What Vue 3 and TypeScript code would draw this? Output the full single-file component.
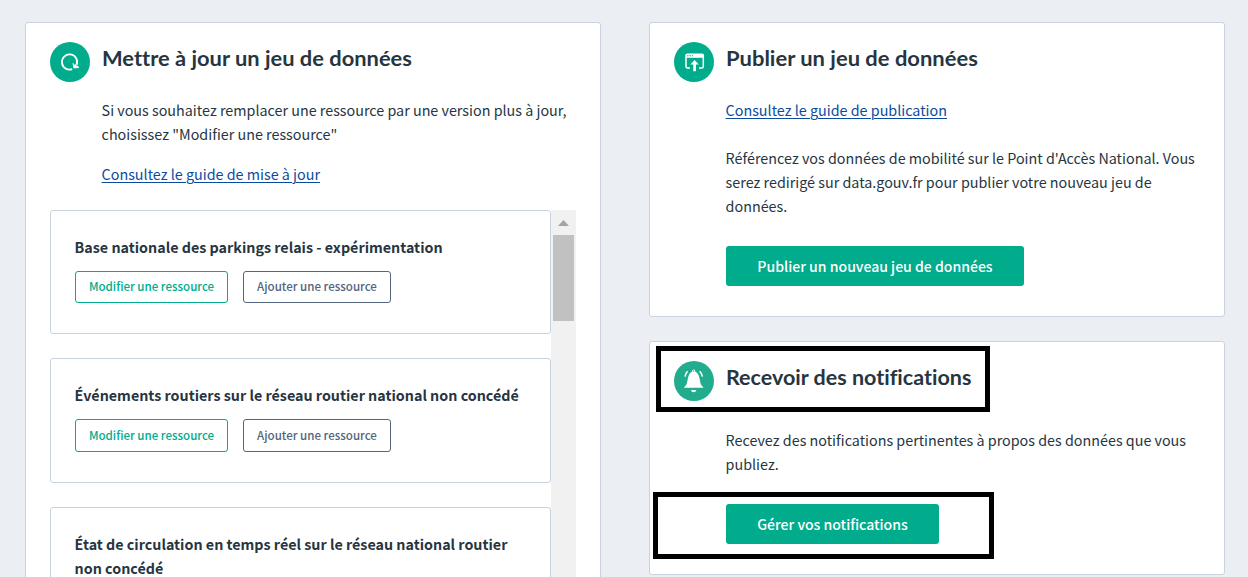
<script setup lang="ts">
interface Dataset {
  id: number
  lines: string[]
  actions: boolean
}

const datasets: Dataset[] = [
  { id: 1, lines: ['Base nationale des parkings relais - expérimentation'], actions: true },
  { id: 2, lines: ['Événements routiers sur le réseau routier national non concédé'], actions: true },
  { id: 3, lines: ['État de circulation en temps réel sur le réseau national routier', 'non concédé'], actions: false },
]
</script>

<template>
  <main class="page">
    <section class="card update">
      <header class="head">
        <svg class="icon" viewBox="0 0 40 40">
          <circle cx="20" cy="20" r="20" fill="#00ac8c" />
          <path d="M22.2 27.1A7.6 7.6 0 1 1 26.6 22.8" fill="none" stroke="#fff" stroke-width="1.8" />
          <path d="M23 21.4l.8 4.7 5-.5-1-1.6-1.2.3-1-1.6-1.2.4z" fill="#fff" stroke="#fff" stroke-width=".7" />
        </svg>
        <h2 class="h1">Mettre à jour un jeu de données</h2>
      </header>
      <div class="body">
        <p>
          <span class="line">Si vous souhaitez remplacer une ressource par une version plus à jour,</span>
          <span class="line">choisissez "Modifier une ressource"</span>
        </p>
        <p><a class="line">Consultez le guide de mise à jour</a></p>
      </div>
      <div class="scroller">
        <div class="list">
          <article v-for="d in datasets" :key="d.id" class="item">
            <h4><span v-for="l in d.lines" :key="l" class="line">{{ l }}</span></h4>
            <div v-if="d.actions" class="actions">
              <button class="small primary"><span>Modifier une ressource</span></button>
              <button class="small secondary"><span>Ajouter une ressource</span></button>
            </div>
          </article>
        </div>
        <div class="bar">
          <svg class="arrow" viewBox="0 0 25 25"><path d="M7 16h11l-5.5-6z" fill="#a3a3a3" /></svg>
          <div class="thumb"></div>
        </div>
      </div>
    </section>

    <div class="column">
      <section class="card publish">
        <header class="head">
          <svg class="icon" viewBox="0 0 40 40">
            <circle cx="20" cy="20" r="20" fill="#00ac8c" />
            <path d="M16 26h-2.6a1.4 1.4 0 0 1-1.4-1.4V13.5a1.2 1.2 0 0 1 1.2-1.2h14.9a1.2 1.2 0 0 1 1.2 1.2v11.1a1.4 1.4 0 0 1-1.4 1.4H25" fill="none" stroke="#fff" stroke-width="1.5" />
            <path d="M12 12.2h17.3v3.6H12z" fill="#fff" />
            <path d="M13.2 13.8h1.3m1 0h1.3m1 0h1.3" stroke="#00ac8c" stroke-width="1.1" />
            <path d="M20.6 18l4.2 4.6h-2.9v6.6h-2.6v-6.6h-2.9z" fill="#fff" />
          </svg>
          <h2 class="h2">Publier un jeu de données</h2>
        </header>
        <div class="body">
          <p class="guide"><a class="line">Consultez le guide de publication</a></p>
          <p>
            <span class="line">Référencez vos données de mobilité sur le Point d'Accès National. Vous</span>
            <span class="line">serez redirigé sur data.gouv.fr pour publier votre nouveau jeu de</span>
            <span class="line">données.</span>
          </p>
          <button class="big new"><span>Publier un nouveau jeu de données</span></button>
        </div>
      </section>

      <section class="card notify">
        <header class="head">
          <svg class="icon" viewBox="0 0 40 40">
            <circle cx="20" cy="20" r="20" fill="#22ac8e" />
            <path d="M10.2 26.8v-.8c1.4-.9 2.3-2 2.8-4.2l1.1-5.3c.6-3 2-4.9 4.1-5.8a1.6 1.6 0 1 1 3 0c2.1.9 3.5 2.8 4.1 5.8l1.1 5.3c.5 2.2 1.4 3.3 2.8 4.2v.8z" fill="#fff" />
            <circle cx="19.7" cy="10" r=".7" fill="#22ac8e" />
            <path d="M17 29h5.3a2.7 2.7 0 0 1-5.3 0z" fill="#fff" />
            <path d="M13.6 10.2q-2 2-2.6 5.4M25.7 10.2q2 2 2.7 5.4" fill="none" stroke="#fff" stroke-width="1.6" />
          </svg>
          <h2 class="h3">Recevoir des notifications</h2>
        </header>
        <div class="body">
          <p>
            <span class="line">Recevez des notifications pertinentes à propos des données que vous</span>
            <span class="line">publiez.</span>
          </p>
          <button class="big manage"><span>Gérer vos notifications</span></button>
        </div>
        <div class="mark mark-title"></div>
        <div class="mark mark-button"></div>
      </section>
    </div>
  </main>
</template>

<style>
body { margin: 0; overflow: hidden; }
</style>

<style scoped>
* { box-sizing: border-box; }
.page {
  width: 1248px; height: 577px; overflow: hidden;
  display: flex; gap: 48px; padding: 22px 23px 0 25px;
  background: #ebeef3; color: #26353f;
  font: 14.33px/24px "Noto Sans CJK SC", "Noto Sans", sans-serif;
}
.card { position: relative; width: 576px; padding: 19px 24px 0; background: #fff; border: 1px solid #c9d3df; border-radius: 3px; }
.update { height: 620px; }
.column { display: flex; flex-direction: column; gap: 24px; }
.publish { height: 295px; }
.notify { height: 234px; }
.head { display: flex; gap: 11.5px; height: 56px; }
.notify .head { height: 67px; }
.icon { width: 40px; height: 40px; flex: none; display: block; }
h2 {
  margin: 0; padding-top: 2px; width: max-content; white-space: nowrap;
  font: 700 20px/28px "URW Gothic", Lato, sans-serif;
  font-variant-ligatures: none; transform-origin: 0 0;
}
.h1 { transform: scaleX(1.094); }
.h2 { transform: scaleX(1.098); }
.h3 { transform: scaleX(1.075); }
.body { padding-left: 51.6px; }
p { margin: 0 0 16px; }
.line { display: block; white-space: nowrap; width: max-content; }
a { color: #0a4ba0; text-decoration: underline; text-underline-offset: 2px; text-decoration-thickness: 1px; }
.guide { margin-bottom: 24px; }
.scroller { display: flex; margin-top: 23.9px; }
.list { width: 501px; display: flex; flex-direction: column; gap: 24px; }
.item { height: 124.5px; padding: 24px 23.6px; border: 1px solid #c9d3df; border-radius: 3px; flex: none; }
.item:last-child { height: 149px; }
h4 { margin: 0 0 12px; font-size: 14.31px; line-height: 24px; font-weight: 700; }
.actions { display: flex; gap: 15px; }
button { display: flex; align-items: center; justify-content: center; padding: 0; border-radius: 3px; white-space: nowrap; font-family: inherit; font-weight: 500; }
.small { height: 32.5px; padding: 0 0 2px .8px; background: #fff; font-size: 11.55px; line-height: 20px; border: 1px solid; }
.primary { width: 153px; color: #00ac8c; }
.secondary { width: 148px; color: #53657d; }
.big { height: 40px; background: #00ac8c; border: 0; color: #fff; font-size: 14.05px; }
.new { width: 298px; margin: 28px 0 0 .4px; }
.manage { width: 213px; margin: 28px 0 0 .4px; }
.bar { width: 25px; height: 400px; background: #f1f1f1; }
.arrow { display: block; width: 25px; height: 25px; }
.thumb { width: 21px; height: 86px; margin-left: 2px; background: #c1c1c1; }
.mark { position: absolute; border: 5px solid #000; }
.mark-title { left: 6px; top: 4px; width: 334px; height: 66px; }
.mark-button { left: 3px; top: 150px; width: 341px; height: 67px; }
</style>
